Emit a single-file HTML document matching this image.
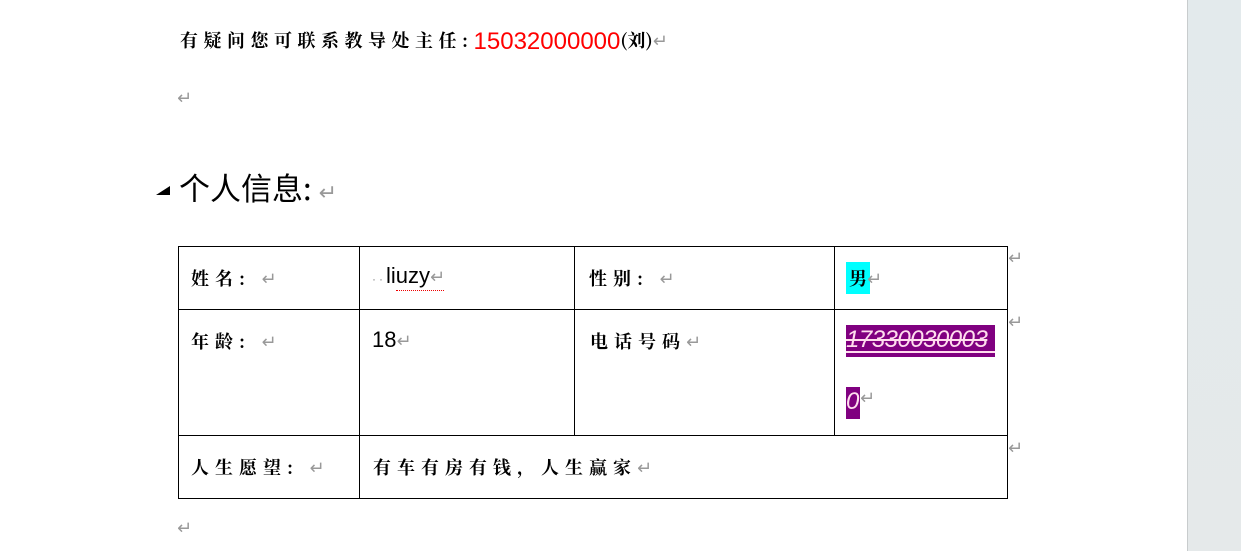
<!DOCTYPE html>
<html><head><meta charset="utf-8"><style>
body{margin:0;width:1241px;height:551px;overflow:hidden;background:#fff;position:relative;font-family:"Liberation Sans","Noto Serif CJK SC",serif;}
.a{position:absolute;white-space:nowrap;line-height:1;}
.cj{font-family:"Noto Serif CJK SC","WenQuanYi Zen Hei",serif;font-weight:bold;font-size:18px;letter-spacing:6px;}
.rt{color:#999;font-family:"DejaVu Sans",sans-serif;font-size:18px;font-weight:normal;letter-spacing:0}
.h{position:absolute;background:#000;}
</style></head><body>
<div style="position:absolute;left:1187px;top:0;width:54px;height:551px;background:linear-gradient(#e3eaec,#e5e9ea);border-left:1px solid #c8cccd"></div>

<div class="a cj" style="left:180px;top:28px;letter-spacing:5.5px">有疑问您可联系教导处主任:<span style="color:#f00;font-family:'Liberation Sans',sans-serif;font-weight:normal;font-size:24px;letter-spacing:0;position:relative;top:2px">15032000000</span><span style="letter-spacing:0">(刘)</span><span class="rt">↵</span></div>
<div class="a rt" style="left:177px;top:90px">↵</div>

<div class="a" style="left:156px;top:186px;width:0;height:0;border-left:14px solid transparent;border-bottom:9px solid #000"></div>
<div class="a" style="left:179px;top:171px;font-family:'Noto Sans CJK SC',sans-serif;font-size:31px">个人信息: <span class="rt" style="font-size:22px">↵</span></div>

<div class="h" style="left:178px;top:246px;width:830px;height:1px"></div>
<div class="h" style="left:178px;top:309px;width:830px;height:1px"></div>
<div class="h" style="left:178px;top:435px;width:830px;height:1px"></div>
<div class="h" style="left:178px;top:498px;width:830px;height:1px"></div>
<div class="h" style="left:178px;top:246px;width:1px;height:253px"></div>
<div class="h" style="left:359px;top:246px;width:1px;height:253px"></div>
<div class="h" style="left:574px;top:246px;width:1px;height:190px"></div>
<div class="h" style="left:834px;top:246px;width:1px;height:190px"></div>
<div class="h" style="left:1007px;top:246px;width:1px;height:253px"></div>

<div class="a cj" style="left:191px;top:269px">姓名:&nbsp;<span class="rt">↵</span></div>
<div class="a" style="left:372px;top:265px;font-size:22px"><span style="color:#888;font-size:12px;letter-spacing:3px">··</span>liuzy<span class="rt">↵</span></div>
<div class="a" style="left:396px;top:288px;width:48px;height:2px;border-bottom:1px dotted #e00"></div>
<div class="a cj" style="left:589px;top:269px">性别:&nbsp;<span class="rt">↵</span></div>
<div class="a" style="left:846px;top:262px;width:24px;height:32px;background:#0ff"></div>
<div class="a cj" style="left:849px;top:269px;letter-spacing:0">男<span class="rt">↵</span></div>
<div class="a rt" style="left:1008px;top:250px">↵</div>

<div class="a cj" style="left:191px;top:332px">年龄:&nbsp;<span class="rt">↵</span></div>
<div class="a" style="left:372px;top:329px;font-size:22px">18<span class="rt">↵</span></div>
<div class="a cj" style="left:590px;top:332px">电话号码<span class="rt">↵</span></div>
<div class="a" style="left:846px;top:325px;width:149px;height:32px;background:#800080;overflow:hidden"><span style="position:absolute;left:0;top:3px;color:#fde;font-style:italic;font-size:24px;font-family:'Liberation Sans',sans-serif;text-decoration:line-through;letter-spacing:-0.5px">17330030003</span><div style="position:absolute;left:0;top:26px;width:149px;height:2px;background:#fde"></div></div>
<div class="a" style="left:846px;top:387px;width:14px;height:32px;background:#800080;overflow:hidden"><span style="position:absolute;left:0;top:3px;color:#fde;font-style:italic;font-size:24px">0</span></div>
<div class="a rt" style="left:860px;top:390px">↵</div>
<div class="a rt" style="left:1008px;top:314px">↵</div>

<div class="a cj" style="left:191px;top:458px">人生愿望:&nbsp;<span class="rt">↵</span></div>
<div class="a cj" style="left:373px;top:458px">有车有房有钱，人生赢家<span class="rt">↵</span></div>
<div class="a rt" style="left:1008px;top:440px">↵</div>
<div class="a rt" style="left:177px;top:520px">↵</div>
</body></html>
